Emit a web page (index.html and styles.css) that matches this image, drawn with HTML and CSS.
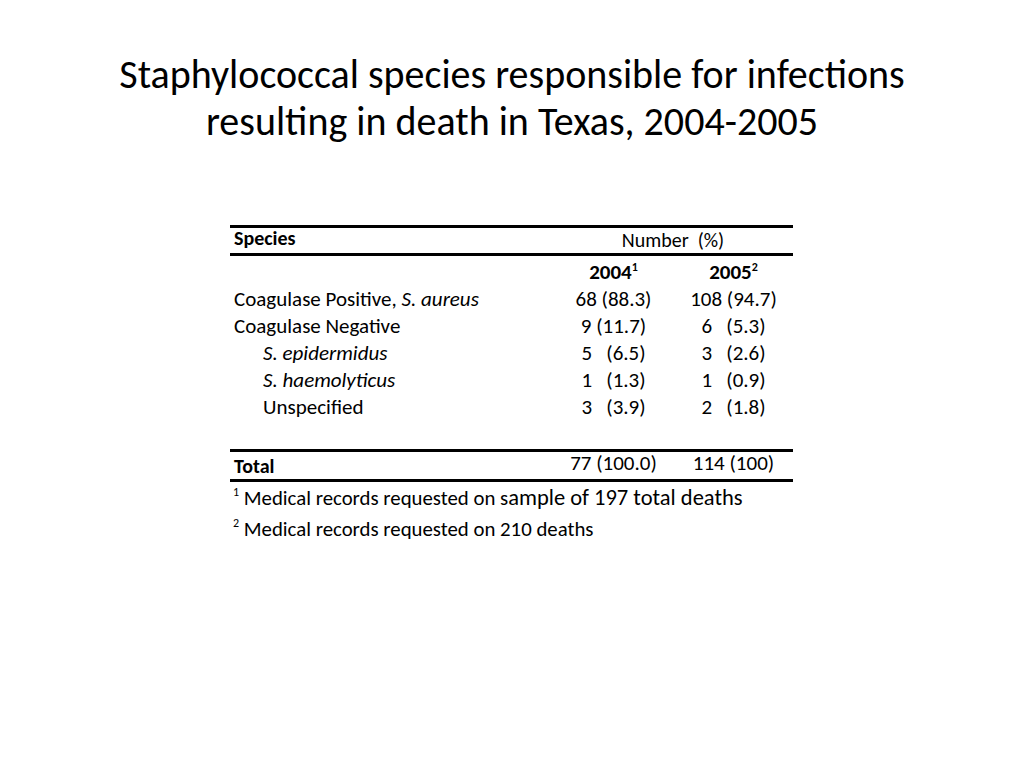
FILE: index.html
```html
<!DOCTYPE html>
<html>
<head>
<meta charset="utf-8">
<link rel="stylesheet" href="styles.css">
</head>
<body>
<div class="slide">
  <h1 class="title">Staphylococcal species responsible for infections<br>resulting in death in Texas, 2004-2005</h1>
  <div class="table-wrap">
    <table class="data">
      <colgroup><col class="c-name"><col class="c-num1"><col class="c-num2"></colgroup>
      <tr class="head">
        <th class="species">Species</th>
        <th class="number" colspan="2">Number&nbsp; (%)</th>
      </tr>
      <tr class="years">
        <td></td>
        <td class="yr">2004<sup>1</sup></td>
        <td class="yr">2005<sup>2</sup></td>
      </tr>
      <tr><td>Coagulase Positive, <i>S. aureus</i></td><td class="v">68 (88.3)</td><td class="v">108 (94.7)</td></tr>
      <tr><td>Coagulase Negative</td><td class="v">9 (11.7)</td><td class="v">6   (5.3)</td></tr>
      <tr><td class="ind"><i>S. epidermidus</i></td><td class="v">5   (6.5)</td><td class="v">3   (2.6)</td></tr>
      <tr><td class="ind"><i>S. haemolyticus</i></td><td class="v">1   (1.3)</td><td class="v">1   (0.9)</td></tr>
      <tr><td class="ind">Unspecified</td><td class="v">3   (3.9)</td><td class="v">2   (1.8)</td></tr>
      <tr class="blank"><td></td><td></td><td></td></tr>
      <tr class="total"><td class="tl">Total</td><td class="v tv">77 (100.0)</td><td class="v tv">114 (100)</td></tr>
    </table>
    <p class="note"><sup>1</sup> Medical records requested on s<span class="big">ample of 197 total deaths</span></p>
    <p class="note note2"><sup>2</sup> Medical records requested on 210 deaths</p>
  </div>
</div>
</body>
</html>
```
FILE: styles.css
```css
html, body {
  margin: 0;
  padding: 0;
  background: #fff;
}
.slide {
  width: 1024px;
  height: 768px;
  background: #fff;
  color: #000;
  font-family: Carlito, "Open Sans", sans-serif;
  box-sizing: border-box;
  padding-top: 51px;
}
.title {
  margin: 0;
  font-weight: normal;
  font-size: 40px;
  line-height: 47px;
  text-align: center;
}
.table-wrap {
  width: 563px;
  margin: 80px 0 0 230px;
}
.data {
  width: 563px;
  border-collapse: collapse;
  font-size: 21px;
  table-layout: fixed;
}
.c-name { width: 323px; }
.c-num1 { width: 121px; }
.c-num2 { width: 119px; }
.data td, .data th {
  padding: 0;
  height: 27px;
  line-height: 27px;
  vertical-align: middle;
}
.data td:first-child, .data th:first-child {
  padding-left: 4px;
}
.head th {
  border-top: 3px solid #000;
  border-bottom: 3px solid #000;
  font-size: 20px;
  vertical-align: top;
}
.head th.species {
  text-align: left;
  line-height: 20px;
  height: 25px;
  font-weight: bold;
}
.head th.number {
  text-align: center;
  font-weight: normal;
  padding-top: 1px;
  height: 24px;
  line-height: 22px;
}
.years td { height: 30px; }
.data .yr {
  text-align: center;
  font-weight: bold;
  padding-top: 2px;
  height: 28px;
}
sup {
  font-size: 12px;
  line-height: 0;
  vertical-align: 8px;
}
.v {
  text-align: center;
  white-space: pre;
}
.data td.ind { padding-left: 33px; }
.blank td { height: 28px; }
.total td {
  border-top: 3px solid #000;
  border-bottom: 3px solid #000;
  height: 27px;
  vertical-align: top;
}
.data td.tl {
  font-weight: bold;
  font-size: 20px;
  padding-top: 3px;
  height: 24px;
  line-height: 22px;
}
.data td.tv { line-height: 22px; }
.note {
  margin: 0;
  font-size: 20.8px;
  line-height: 32px;
  padding-left: 3px;
}
.note sup { vertical-align: 9px; }
.big { font-size: 22.5px; }
.note2 { line-height: 30px; }
```
